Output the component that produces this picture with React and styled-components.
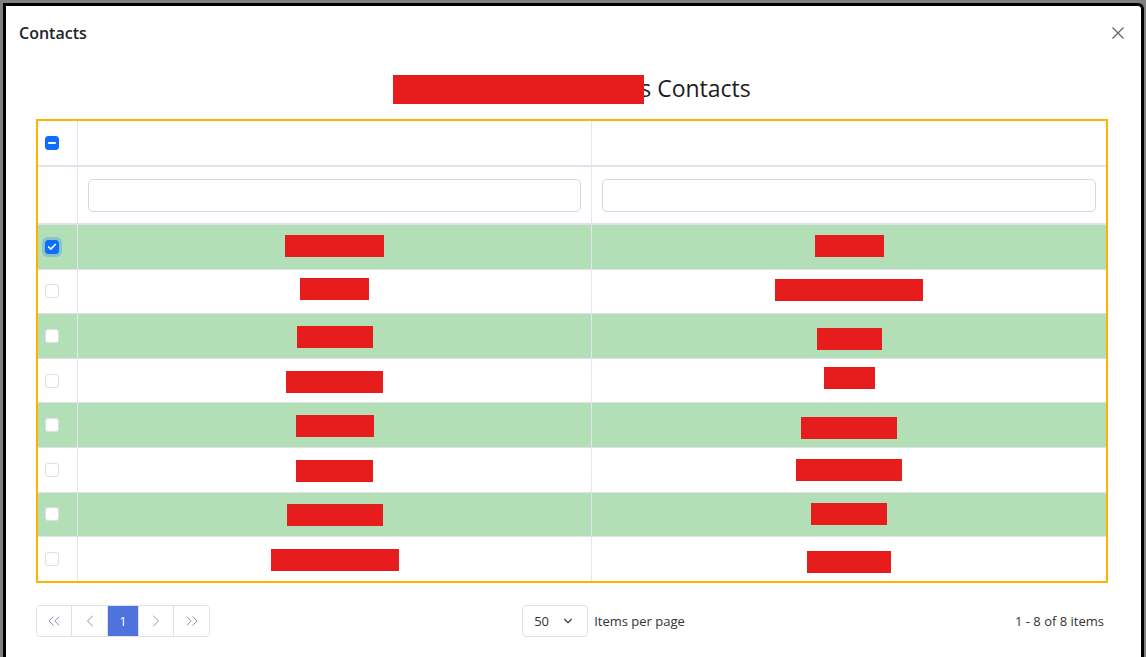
import React from "react"
import styled, { createGlobalStyle } from "styled-components"
import { ChevronsLeft, ChevronLeft, ChevronRight, ChevronsRight, ChevronDown, Check } from "lucide-react"

const GlobalStyle = createGlobalStyle`
  html, body { margin: 0; height: 100%; overflow: hidden; background: #808080; }
  body { font-family: "Open Sans", "Noto Sans", sans-serif; color: #212529; }
  *, *::before, *::after { box-sizing: border-box; }
`

// redacted widths + small vertical offsets, one entry per row: [w2, dy2, w3, dy3]
const rows = [
  [99, -2, 69, -2],
  [69, -3, 148, -2],
  [76, 0, 65, 2],
  [97, 1, 51, -3],
  [78, 0, 96, 2],
  [77, 0, 106, -1],
  [96, 0, 76, -1],
  [128, 0, 84, 2],
]

const Backdrop = styled.div`
  height: 100vh;
  padding: 3px 2px 0 3px;
`

const Modal = styled.div`
  height: 100%;
  background: #fff;
  border: 3px solid #000;
  border-bottom: none;
  border-top-right-radius: 6px;
`

const Header = styled.div`
  height: 54px;
  display: flex;
  align-items: center;
  justify-content: space-between;
  padding: 0 16px 0 13px;
`

const Title = styled.h5`
  margin: 0;
  font-size: 16px;
  font-weight: 600;
  color: #212529;
`

const Close = styled.button`
  width: 14px;
  height: 14px;
  padding: 0;
  border: none;
  background: transparent;
  display: flex;
  align-items: center;
  justify-content: center;
  cursor: pointer;
`

const Body = styled.div`
  padding: 13px 33px 0 30px;
`

const Heading = styled.h3`
  margin: 0 0 16px;
  text-align: center;
  font-size: 23px;
  font-weight: 400;
  line-height: 30px;
  color: #1d1d1d;
`

const HeadRedact = styled.span`
  display: inline-block;
  width: 251px;
  height: 29px;
  vertical-align: top;
  margin-right: -4px;
  position: relative;
  top: 2px;
  background: #e71d1d;
`

const Table = styled.table`
  width: 100%;
  table-layout: fixed;
  border-collapse: separate;
  border-spacing: 0;
  border: 2px solid #ffb300;
`

const Cell = styled.td`
  padding: 0;
  height: ${(p) => p.$h}px;
  vertical-align: middle;
  text-align: center;
  background: ${(p) => (p.$green ? "#b3dfb7" : "#fff")};
  border-right: ${(p) => (p.$last ? "none" : "1px solid #e4e5ee")};
  border-bottom: ${(p) => (p.$bottom ? `${p.$bottom}px solid #dfe2ec` : "none")};
`

const CheckCell = styled(Cell)`
  text-align: left;
  padding-left: 7px;
`

const Box = styled.span`
  display: flex;
  align-items: center;
  justify-content: center;
  width: 14px;
  height: 14px;
  border-radius: 3px;
  background: ${(p) => (p.$on ? "#0d6efd" : "#fff")};
  border: 1px solid ${(p) => (p.$on ? "#0d6efd" : "#dcdfe6")};
  box-shadow: ${(p) => (p.$focus ? "0 0 0 3px rgba(13,110,253,0.25)" : "none")};
`

const Dash = styled.span`
  width: 8px;
  height: 2px;
  border-radius: 1px;
  background: #fff;
`

const Filter = styled.input`
  display: block;
  width: calc(100% - 20px);
  height: 33px;
  margin: 0 10px;
  border: 1px solid #d5d5e3;
  border-radius: 5px;
  outline: none;
  font: inherit;
`

const Redact = styled.span`
  display: inline-block;
  height: 22px;
  vertical-align: middle;
  background: #e71d1d;
`

const Footer = styled.div`
  margin-top: 22px;
  display: flex;
  align-items: center;
  justify-content: space-between;
  font-size: 13px;
  color: #333;
`

const Pager = styled.div`
  display: flex;
  height: 32px;
  border: 1px solid #dee2e6;
  border-radius: 4px;
  overflow: hidden;
`

const PageBtn = styled.button`
  width: ${(p) => p.$w}px;
  height: 100%;
  padding: 0;
  display: flex;
  align-items: center;
  justify-content: center;
  border: none;
  border-right: ${(p) => (p.$end ? "none" : "1px solid #dee2e6")};
  background: ${(p) => (p.$active ? "#4e73df" : "#fff")};
  color: ${(p) => (p.$active ? "#fff" : "#7f8aa8")};
  font: inherit;
  font-size: 13px;
  cursor: pointer;
`

const SizeGroup = styled.div`
  display: flex;
  align-items: center;
  gap: 6px;
  margin-right: 18px;
`

const SizeSelect = styled.div`
  width: 66px;
  height: 32px;
  display: flex;
  align-items: center;
  justify-content: space-between;
  padding: 0 12px 0 11px;
  border: 1px solid #dee2e6;
  border-radius: 4px;
  color: #333;
`

const Info = styled.span`
  padding-right: 4px;
`

function Checkbox({ state }) {
  const on = state !== "none"
  return (
    <Box $on={on} $focus={state === "checked"}>
      {state === "checked" && <Check size={10} strokeWidth={4} color="#fff" />}
      {state === "mixed" && <Dash />}
    </Box>
  )
}

export default function App() {
  return (
    <>
      <GlobalStyle />
      <Backdrop>
        <Modal>
          <Header>
            <Title>Contacts</Title>
            <Close aria-label="Close">
              <svg width="12" height="12" viewBox="0 0 12 12">
                <path d="M0.5 0.5 L11.5 11.5 M11.5 0.5 L0.5 11.5" stroke="#666" strokeWidth="1.3" />
              </svg>
            </Close>
          </Header>
          <Body>
            <Heading>
              <HeadRedact />s Contacts
            </Heading>
            <Table>
              <colgroup>
                <col style={{ width: 40 }} />
                <col style={{ width: 514 }} />
                <col />
              </colgroup>
              <thead>
                <tr>
                  <CheckCell as="th" $h={46} $bottom={2}>
                    <Checkbox state="mixed" />
                  </CheckCell>
                  <Cell as="th" $h={46} $bottom={2} />
                  <Cell as="th" $h={46} $bottom={2} $last />
                </tr>
                <tr>
                  <Cell as="th" $h={58} $bottom={2} />
                  <Cell as="th" $h={58} $bottom={2}>
                    <Filter />
                  </Cell>
                  <Cell as="th" $h={58} $bottom={2} $last>
                    <Filter />
                  </Cell>
                </tr>
              </thead>
              <tbody>
                {rows.map(([w2, d2, w3, d3], i) => {
                  const green = i % 2 === 0
                  const bottom = i < rows.length - 1 ? 1 : 0
                  const h = i === rows.length - 1 ? 44 : 44.6
                  return (
                    <tr key={i}>
                      <CheckCell $h={h} $green={green} $bottom={bottom}>
                        <Checkbox state={i === 0 ? "checked" : "none"} />
                      </CheckCell>
                      <Cell $h={h} $green={green} $bottom={bottom}>
                        <Redact style={{ width: w2, transform: `translateY(${d2}px)` }} />
                      </Cell>
                      <Cell $h={h} $green={green} $bottom={bottom} $last>
                        <Redact style={{ width: w3, transform: `translateY(${d3}px)` }} />
                      </Cell>
                    </tr>
                  )
                })}
              </tbody>
            </Table>
            <Footer>
              <Pager>
                <PageBtn $w={35}><ChevronsLeft size={20} strokeWidth={1.1} /></PageBtn>
                <PageBtn $w={36}><ChevronLeft size={20} strokeWidth={1.1} /></PageBtn>
                <PageBtn $w={31} $active>1</PageBtn>
                <PageBtn $w={35}><ChevronRight size={20} strokeWidth={1.1} /></PageBtn>
                <PageBtn $w={35} $end><ChevronsRight size={20} strokeWidth={1.1} /></PageBtn>
              </Pager>
              <SizeGroup>
                <SizeSelect>
                  <span>50</span>
                  <ChevronDown size={14} strokeWidth={2} color="#444" />
                </SizeSelect>
                <span>Items per page</span>
              </SizeGroup>
              <Info>1 - 8 of 8 items</Info>
            </Footer>
          </Body>
        </Modal>
      </Backdrop>
    </>
  )
}
